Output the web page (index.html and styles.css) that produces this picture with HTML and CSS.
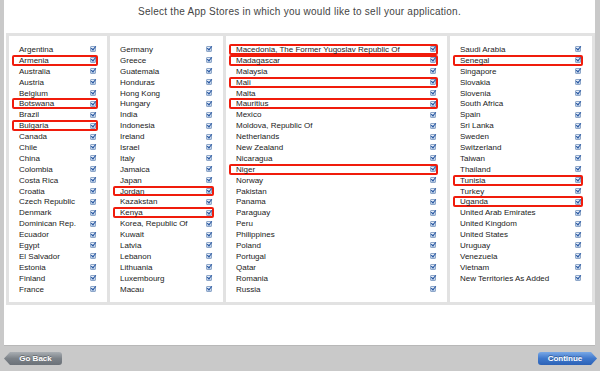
FILE: index.html
```html
<!DOCTYPE html>
<html>
<head>
    <link rel="stylesheet" href="styles.css">
</head>
<body>
    <div class="window">
        <h1 class="title">Select the App Stores in which you would like to sell your application.</h1>

        <div class="stores">
            <ul class="col">
                <li>Argentina<span class="cb"></span></li>
                <li class="on">Armenia<span class="cb"></span></li>
                <li>Australia<span class="cb"></span></li>
                <li>Austria<span class="cb"></span></li>
                <li>Belgium<span class="cb"></span></li>
                <li class="on">Botswana<span class="cb"></span></li>
                <li>Brazil<span class="cb"></span></li>
                <li class="on">Bulgaria<span class="cb"></span></li>
                <li>Canada<span class="cb"></span></li>
                <li>Chile<span class="cb"></span></li>
                <li>China<span class="cb"></span></li>
                <li>Colombia<span class="cb"></span></li>
                <li>Costa Rica<span class="cb"></span></li>
                <li>Croatia<span class="cb"></span></li>
                <li>Czech Republic<span class="cb"></span></li>
                <li>Denmark<span class="cb"></span></li>
                <li>Dominican Rep.<span class="cb"></span></li>
                <li>Ecuador<span class="cb"></span></li>
                <li>Egypt<span class="cb"></span></li>
                <li>El Salvador<span class="cb"></span></li>
                <li>Estonia<span class="cb"></span></li>
                <li>Finland<span class="cb"></span></li>
                <li>France<span class="cb"></span></li>
            </ul>
            <ul class="col">
                <li>Germany<span class="cb"></span></li>
                <li>Greece<span class="cb"></span></li>
                <li>Guatemala<span class="cb"></span></li>
                <li>Honduras<span class="cb"></span></li>
                <li>Hong Kong<span class="cb"></span></li>
                <li>Hungary<span class="cb"></span></li>
                <li>India<span class="cb"></span></li>
                <li>Indonesia<span class="cb"></span></li>
                <li>Ireland<span class="cb"></span></li>
                <li>Israel<span class="cb"></span></li>
                <li>Italy<span class="cb"></span></li>
                <li>Jamaica<span class="cb"></span></li>
                <li>Japan<span class="cb"></span></li>
                <li class="on">Jordan<span class="cb"></span></li>
                <li>Kazakstan<span class="cb"></span></li>
                <li class="on">Kenya<span class="cb"></span></li>
                <li>Korea, Republic Of<span class="cb"></span></li>
                <li>Kuwait<span class="cb"></span></li>
                <li>Latvia<span class="cb"></span></li>
                <li>Lebanon<span class="cb"></span></li>
                <li>Lithuania<span class="cb"></span></li>
                <li>Luxembourg<span class="cb"></span></li>
                <li>Macau<span class="cb"></span></li>
            </ul>
            <ul class="col">
                <li class="on">Macedonia, The Former Yugoslav Republic Of<span class="cb"></span></li>
                <li class="on">Madagascar<span class="cb"></span></li>
                <li>Malaysia<span class="cb"></span></li>
                <li class="on">Mali<span class="cb"></span></li>
                <li>Malta<span class="cb"></span></li>
                <li class="on">Mauritius<span class="cb"></span></li>
                <li>Mexico<span class="cb"></span></li>
                <li>Moldova, Republic Of<span class="cb"></span></li>
                <li>Netherlands<span class="cb"></span></li>
                <li>New Zealand<span class="cb"></span></li>
                <li>Nicaragua<span class="cb"></span></li>
                <li class="on">Niger<span class="cb"></span></li>
                <li>Norway<span class="cb"></span></li>
                <li>Pakistan<span class="cb"></span></li>
                <li>Panama<span class="cb"></span></li>
                <li>Paraguay<span class="cb"></span></li>
                <li>Peru<span class="cb"></span></li>
                <li>Philippines<span class="cb"></span></li>
                <li>Poland<span class="cb"></span></li>
                <li>Portugal<span class="cb"></span></li>
                <li>Qatar<span class="cb"></span></li>
                <li>Romania<span class="cb"></span></li>
                <li>Russia<span class="cb"></span></li>
            </ul>
            <ul class="col">
                <li>Saudi Arabia<span class="cb"></span></li>
                <li class="on">Senegal<span class="cb"></span></li>
                <li>Singapore<span class="cb"></span></li>
                <li>Slovakia<span class="cb"></span></li>
                <li>Slovenia<span class="cb"></span></li>
                <li>South Africa<span class="cb"></span></li>
                <li>Spain<span class="cb"></span></li>
                <li>Sri Lanka<span class="cb"></span></li>
                <li>Sweden<span class="cb"></span></li>
                <li>Switzerland<span class="cb"></span></li>
                <li>Taiwan<span class="cb"></span></li>
                <li>Thailand<span class="cb"></span></li>
                <li class="on">Tunisia<span class="cb"></span></li>
                <li>Turkey<span class="cb"></span></li>
                <li class="on">Uganda<span class="cb"></span></li>
                <li>United Arab Emirates<span class="cb"></span></li>
                <li>United Kingdom<span class="cb"></span></li>
                <li>United States<span class="cb"></span></li>
                <li>Uruguay<span class="cb"></span></li>
                <li>Venezuela<span class="cb"></span></li>
                <li>Vietnam<span class="cb"></span></li>
                <li>New Territories As Added<span class="cb"></span></li>
            </ul>
        </div>
    </div>

    <div class="footer">
        <button class="btn back">Go Back</button>
        <button class="btn next">Continue</button>
    </div>
</body>
</html>
```

FILE: styles.css
```css
body {
    margin: 0;
    background-color: #c9c9c9;
    font-family: "Liberation Sans", Arial, sans-serif;
}

.window {
    box-sizing: border-box;
    height: 345px;
    margin: 0 5px 0 4px;
    padding-top: 6px;
    background-color: #fff;
    box-shadow: 0 1px 0 #b8b8b8;
}

.title {
    margin: 0;
    font-size: 10px;
    line-height: 12px;
    font-weight: normal;
    letter-spacing: 0.25px;
    text-align: center;
    color: #444;
}

.stores {
    display: grid;
    grid-template-columns: 98px 116px 224px 145px;
    margin: 15px 0 0 2px;
    border: 3px solid #e2e2e2;
}

.col {
    margin: 0;
    padding: 8px 0 8px 3px;
    list-style: none;
}

.col + .col {
    border-left: 3px solid #e2e2e2;
}

.col li {
    display: flex;
    justify-content: space-between;
    align-items: center;
    height: 10.9px;
    margin-right: 9px;
    padding: 0 2px 0 7px;
    border-radius: 2px;
    font-size: 8px;
    color: #222;
    white-space: nowrap;
}

.col li.on {
    box-shadow: inset 0 0 0 2px #f01c0c;
}

.cb {
    position: relative;
    box-sizing: border-box;
    width: 6px;
    height: 6px;
    border: 1px solid #8ea7c9;
    border-radius: 1px;
    background: linear-gradient(#eef3fb, #b7cbe6);
}

.cb::after {
    content: "";
    position: absolute;
    left: 1px;
    top: -2px;
    width: 2px;
    height: 4px;
    border: solid #24549f;
    border-width: 0 1.5px 1.5px 0;
    transform: rotate(40deg);
}

.footer {
    display: flex;
    justify-content: space-between;
    padding: 7px 3px 0 4px;
}

.btn {
    height: 13px;
    padding: 0;
    border: none;
    font-family: "Liberation Sans", Arial, sans-serif;
    font-size: 8px;
    font-weight: bold;
    line-height: 13px;
    color: #fff;
    text-shadow: 0 -1px 0 rgba(0, 0, 0, 0.3);
    cursor: pointer;
}

.back {
    width: 58px;
    padding-left: 5px;
    border-radius: 0 3px 3px 0;
    background: linear-gradient(#a9aeb3, #7c8288 50%, #6b7178);
    clip-path: polygon(0 50%, 6px 0, 100% 0, 100% 100%, 6px 100%);
}

.next {
    width: 59px;
    padding-right: 5px;
    border-radius: 3px 0 0 3px;
    background: linear-gradient(#79a8e6, #3f78cc 50%, #2c62b6);
    clip-path: polygon(0 0, calc(100% - 6px) 0, 100% 50%, calc(100% - 6px) 100%, 0 100%);
}
```
